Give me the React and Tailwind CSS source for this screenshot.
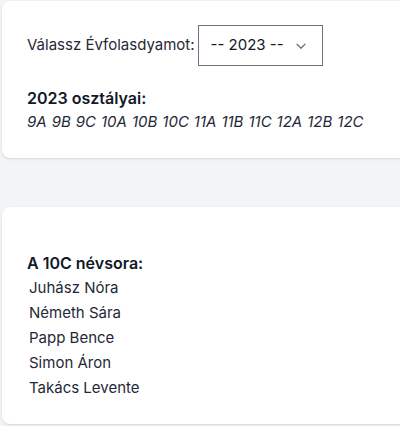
export default function App() {
  const classes = ["9A", "9B", "9C", "10A", "10B", "10C", "11A", "11B", "11C", "12A", "12B", "12C"];
  const names = ["Juhász Nóra", "Németh Sára", "Papp Bence", "Simon Áron", "Takács Levente"];
  return (
    <div className="w-[400px] h-[426px] overflow-hidden bg-[#f3f4f6] pt-[1px] text-[#111827]" style={{ fontFamily: "Inter, 'Noto Sans', sans-serif" }}>
      <div className="ml-[2px] w-[420px] rounded-lg bg-white shadow-sm px-[25px] pt-[24px] pb-[24px]">
        <div className="flex items-center gap-[3px]">
          <span className="text-[15px] text-[#1f2937]">Válassz Évfolasdyamot:</span>
          <div className="flex h-[41px] w-[125px] items-center justify-between border border-[#6b7280] pl-[12px] pr-[14px]">
            <span className="text-[15px]">-- 2023 --</span>
            <svg width="14" height="14" viewBox="0 0 16 16" fill="none" stroke="#6b7280" strokeWidth="1.5" strokeLinecap="round" strokeLinejoin="round">
              <path d="M3.5 6l4.5 4.5 4.5-4.5" />
            </svg>
          </div>
        </div>
        <div className="mt-[20px] text-[16px] font-semibold leading-[24px]">2023 osztályai:</div>
        <div className="text-[15px] italic leading-[24px] text-[#1f2937] flex gap-[5px]">
          {classes.map((c) => (
            <span key={c}>{c}</span>
          ))}
        </div>
      </div>
      <div className="ml-[2px] mt-[49px] w-[420px] rounded-lg bg-white shadow-sm px-[25px] pt-[44px] pb-[24px]">
        <div className="text-[16px] font-semibold leading-[24px]">A 10C névsora:</div>
        <ul className="pl-[2px]">
          {names.map((n) => (
            <li key={n} className="text-[15px] leading-[25px] text-[#1f2937]">{n}</li>
          ))}
        </ul>
      </div>
    </div>
  );
}
